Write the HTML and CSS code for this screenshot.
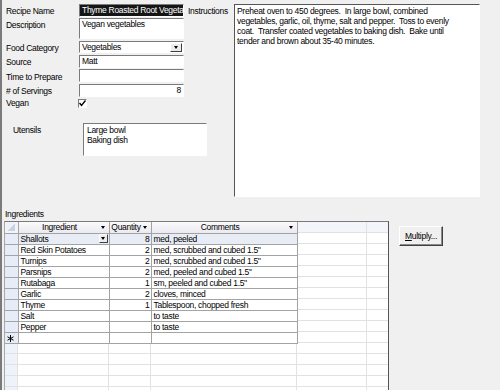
FILE: index.html
```html
<!DOCTYPE html>
<html lang="en">
<head>
    <meta charset="UTF-8">
    <title>Recipe</title>
    <link rel="stylesheet" href="styles.css">
</head>
<body>
<div class="form">

    <div class="top">
        <div class="left">
            <div class="fields">
                <span class="lbl">Recipe Name</span>
                <div class="box name"><span class="sel">Thyme Roasted Root Vegetables</span></div>
                <span class="lbl instr-lbl">Instructions</span>

                <span class="lbl top-lbl">Description</span>
                <div class="box desc">Vegan vegetables</div>

                <span class="lbl">Food Category</span>
                <div class="box combo">
                    <span>Vegetables</span>
                    <span class="drop"><i class="tri"></i></span>
                </div>

                <span class="lbl">Source</span>
                <div class="box">Matt</div>

                <span class="lbl">Time to Prepare</span>
                <div class="box"></div>

                <span class="lbl"># of Servings</span>
                <div class="box num">8</div>

                <span class="lbl">Vegan</span>
                <span class="check">
                    <svg width="7" height="7" viewBox="0 0 7 7"><path d="M0.5 3 L2.5 5.5 L6.5 0.5" fill="none" stroke="#000" stroke-width="1.4"/></svg>
                </span>
            </div>

            <div class="utensils">
                <span class="lbl">Utensils</span>
                <div class="box list">Large bowl<br>Baking dish</div>
            </div>
        </div>

        <div class="box instructions">
            Preheat oven to 450 degrees.&nbsp; In large bowl, combined<br>
            vegetables, garlic, oil, thyme, salt and pepper.&nbsp; Toss to evenly<br>
            coat.&nbsp; Transfer coated vegetables to baking dish.&nbsp; Bake until<br>
            tender and brown about 35-40 minutes.
        </div>
    </div>

    <div class="ingredients">
        <div class="ing-lbl">Ingredients</div>
        <div class="ing-row">
            <div class="sheet">
                <table>
                    <colgroup>
                        <col class="c-sel"><col class="c-ing"><col class="c-qty"><col class="c-com">
                    </colgroup>
                    <tr>
                        <th class="corner"></th>
                        <th><div class="hd"><span>Ingredient</span><i class="tri"></i></div></th>
                        <th><div class="hd"><span>Quantity</span><i class="tri"></i></div></th>
                        <th><div class="hd"><span>Comments</span><i class="tri"></i></div></th>
                    </tr>
                    <tr class="current">
                        <td class="rs"></td>
                        <td><div class="cell-combo"><span>Shallots</span><span class="drop"><i class="tri"></i></span></div></td>
                        <td class="q">8</td>
                        <td>med, peeled</td>
                    </tr>
                    <tr><td class="rs"></td><td>Red Skin Potatoes</td><td class="q">2</td><td>med, scrubbed and cubed 1.5''</td></tr>
                    <tr><td class="rs"></td><td>Turnips</td><td class="q">2</td><td>med, scrubbed and cubed 1.5''</td></tr>
                    <tr><td class="rs"></td><td>Parsnips</td><td class="q">2</td><td>med, peeled and cubed 1.5''</td></tr>
                    <tr><td class="rs"></td><td>Rutabaga</td><td class="q">1</td><td>sm, peeled and cubed 1.5''</td></tr>
                    <tr><td class="rs"></td><td>Garlic</td><td class="q">2</td><td>cloves, minced</td></tr>
                    <tr><td class="rs"></td><td>Thyme</td><td class="q">1</td><td>Tablespoon, chopped fresh</td></tr>
                    <tr><td class="rs"></td><td>Salt</td><td class="q"></td><td>to taste</td></tr>
                    <tr><td class="rs"></td><td>Pepper</td><td class="q"></td><td>to taste</td></tr>
                    <tr>
                        <td class="rs new">
                            <svg width="7" height="7" viewBox="0 0 7 7"><path d="M3.5 0 V7 M0.5 1.8 L6.5 5.2 M0.5 5.2 L6.5 1.8" stroke="#000" stroke-width="1"/></svg>
                        </td>
                        <td></td><td class="q"></td><td></td>
                    </tr>
                </table>
            </div>
            <button class="btn"><u>M</u>ultiply...</button>
        </div>
    </div>

</div>
</body>
</html>
```

FILE: styles.css
```css
* {
    box-sizing: border-box;
}
html, body {
    margin: 0;
    height: 100%;
    overflow: hidden;
}
body {
    background: #f0f0f0;
    font-family: "Liberation Sans", Arial, sans-serif;
    font-size: 8.5px;
    letter-spacing: -0.3px;
    line-height: 10px;
    color: #000;
}
.form {
    border-left: 2px solid #7b7b7b;
    padding-top: 4px;
    height: 390px;
}
.top {
    display: flex;
}
.left {
    width: 232px;
}
.fields {
    display: grid;
    grid-template-columns: 73px 105px 49px;
    grid-template-rows: 14px 23px 14px 14px 15px 14px 10px;
    padding-left: 4px;
}
.lbl {
    grid-column: 1;
    align-self: center;
}
.top-lbl {
    align-self: start;
    padding-top: 2px;
}
.instr-lbl {
    grid-column: 3;
    grid-row: 1;
    padding-left: 4px;
}
.box {
    grid-column: 2;
    background: #fff;
    border: 1px solid;
    border-color: #7a7a7a #fff #fff #7a7a7a;
    height: 13px;
    padding: 0 2px;
    line-height: 11px;
    white-space: nowrap;
    overflow: hidden;
}
.name {
    padding: 0;
}
.sel {
    display: block;
    background: #151515;
    color: #fff;
    padding: 0 2px;
    line-height: 11px;
}
.desc {
    height: 21px;
}
.combo {
    display: flex;
    align-items: center;
    height: 12px;
    padding-right: 1px;
}
.combo span:first-child {
    flex: 1;
}
.drop {
    width: 12px;
    height: 9px;
    background: #ececec;
    border: 1px solid;
    border-color: #fff #404040 #404040 #fff;
    display: flex;
    align-items: center;
    justify-content: center;
}
.tri {
    width: 0;
    height: 0;
    border-left: 2.5px solid transparent;
    border-right: 2.5px solid transparent;
    border-top: 3px solid #000;
}
.num {
    text-align: right;
}
.check {
    grid-column: 2;
    width: 9px;
    height: 9px;
    margin-left: -1px;
    margin-top: 1px;
    background: #fff;
    border: 1px solid;
    border-color: #7a7a7a #fff #fff #7a7a7a;
    display: flex;
    align-items: center;
    justify-content: center;
}
.utensils {
    display: flex;
    align-items: flex-start;
    margin-top: 15px;
    padding-left: 11px;
}
.utensils .lbl {
    align-self: flex-start;
    width: 70px;
    padding-top: 2px;
}
.list {
    width: 124px;
    height: 33px;
    padding: 1px 3px;
    line-height: 10px;
}
.instructions {
    width: 246px;
    height: 193px;
    padding: 1px 2px;
    line-height: 10px;
    border-color: #555 #fff #fff #555;
}
.ingredients {
    margin-top: 12px;
}
.ing-lbl {
    padding-left: 3px;
    margin-bottom: 2px;
}
.ing-row {
    display: flex;
    align-items: flex-start;
}
.sheet {
    margin-left: 2px;
    width: 385px;
    height: 175px;
    border-top: 1px solid #7a7a7a;
    border-right: 1px solid #555;
    border-left: 1px solid #a8a8a8;
    background:
        linear-gradient(to right,
            transparent 12px, #e2e2e2 12px 13px,
            transparent 13px 103px, #e2e2e2 103px 104px,
            transparent 104px 145px, #e2e2e2 145px 146px,
            transparent 146px 291px, #e2e2e2 291px 292px,
            transparent 292px 361px, #e2e2e2 361px 362px,
            transparent 362px),
        repeating-linear-gradient(to bottom, transparent 0 10px, #e2e2e2 10px 11px),
        linear-gradient(#f4f4fb, #f4f4fb) 0 0 / 100% 10px no-repeat,
        linear-gradient(#eef3fb, #eef3fb) 0 0 / 12px 100% no-repeat,
        #fff;
}
table {
    border-collapse: collapse;
    table-layout: fixed;
    width: 292px;
}
.c-sel { width: 13px; }
.c-ing { width: 91px; }
.c-qty { width: 42px; }
.c-com { width: 146px; }
th, td {
    height: 11px;
    padding: 0 2px;
    border: 1px solid #a3a3a3;
    white-space: nowrap;
    overflow: hidden;
    font-weight: normal;
    line-height: 10px;
    background: #fff;
}
tr:first-child th {
    border-top: 0;
}
th:first-child, td:first-child {
    border-left: 0;
}
th {
    background: linear-gradient(#fbfbfd, #e9e9ef);
    padding: 0;
}
.hd {
    display: flex;
    align-items: center;
    padding-right: 4px;
}
.hd span {
    flex: 1;
    text-align: center;
}
.corner {
    background: linear-gradient(135deg, #eef2f8 55%, #c6d3e6 55%);
    background-size: 8px 8px;
    background-repeat: no-repeat;
    background-position: 2px 1px;
    background-color: #f2f4f8;
}
td.rs {
    background: #e6edf8;
    padding: 0;
}
.new svg {
    display: block;
    margin: 1px 0 0 2px;
}
.current td {
    background: #e8ecf4;
}
.current td.rs {
    background: #e6edf8;
}
.cell-combo {
    display: flex;
    align-items: center;
}
.cell-combo span:first-child {
    flex: 1;
}
.cell-combo .drop {
    height: 9px;
    width: 9px;
    margin-right: -1px;
}
.q {
    text-align: right;
    padding-right: 1px;
}
.btn {
    margin: 5px 0 0 10px;
    width: 44px;
    height: 20px;
    padding: 0;
    background: #f0f0f0;
    border: 1px solid;
    border-color: #fff #404040 #404040 #fff;
    box-shadow: inset -1px -1px #8a8a8a;
    font-family: inherit;
    font-size: inherit;
    letter-spacing: inherit;
    color: #000;
}
```
